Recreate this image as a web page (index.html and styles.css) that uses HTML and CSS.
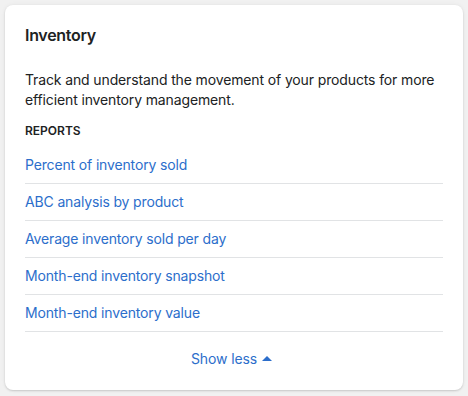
FILE: index.html
```html
<!DOCTYPE html>
<html lang="en">
<head>
<meta charset="utf-8">
<link rel="stylesheet" href="styles.css">
</head>
<body>
<section class="card">
  <h2 class="title">Inventory</h2>
  <p class="desc">Track and understand the movement of your products for more efficient inventory management.</p>
  <h3 class="subhead">REPORTS</h3>
  <ul class="list">
    <li class="item"><a class="link" href="#">Percent of inventory sold</a></li>
    <li class="item"><a class="link" href="#">ABC analysis by product</a></li>
    <li class="item"><a class="link" href="#">Average inventory sold per day</a></li>
    <li class="item"><a class="link" href="#">Month-end inventory snapshot</a></li>
    <li class="item"><a class="link" href="#">Month-end inventory value</a></li>
  </ul>
  <div class="footer">
    <button class="toggle" type="button">Show less<svg class="caret" viewBox="0 0 20 20" width="20" height="20" aria-hidden="true"><path d="M15 12l-5-5-5 5h10z"/></svg></button>
  </div>
</section>
</body>
</html>
```
FILE: styles.css
```css
* { box-sizing: border-box; }
html, body { margin: 0; padding: 0; }
body {
  background: #f1f1f1;
  padding: 5px;
  font-family: Inter, "Noto Sans", "Liberation Sans", sans-serif;
  color: #202223;
  -webkit-font-smoothing: antialiased;
}
.card {
  width: 458px;
  background: #fff;
  border-radius: 8px;
  box-shadow: 0 0 5px rgba(23, 24, 24, 0.05), 0 1px 2px rgba(0, 0, 0, 0.15);
  padding: 18px 20px 21px;
}
.title {
  margin: 0;
  font-size: 16px;
  line-height: 24px;
  font-weight: 600;
  letter-spacing: -0.3px;
}
.desc {
  margin: 23px 0 0;
  font-size: 14px;
  line-height: 20px;
  font-weight: 400;
  letter-spacing: -0.13px;
}
.subhead {
  margin: 13px 0 8px;
  font-size: 12px;
  line-height: 16px;
  font-weight: 600;
}
.list {
  list-style: none;
  margin: 0;
  padding: 0;
}
.item {
  padding: 8px 0;
  border-bottom: 1px solid #e1e3e5;
  font-size: 14px;
  line-height: 20px;
  letter-spacing: -0.15px;
}
.link {
  color: #2c6ecb;
  text-decoration: none;
}
.footer {
  display: flex;
  justify-content: center;
  padding-top: 17px;
}
.toggle {
  display: flex;
  align-items: center;
  background: none;
  border: 0;
  padding: 0;
  font: inherit;
  font-size: 14px;
  line-height: 20px;
  letter-spacing: -0.1px;
  color: #2c6ecb;
  cursor: pointer;
}
.caret {
  width: 20px;
  height: 20px;
  fill: #2c6ecb;
}
```
